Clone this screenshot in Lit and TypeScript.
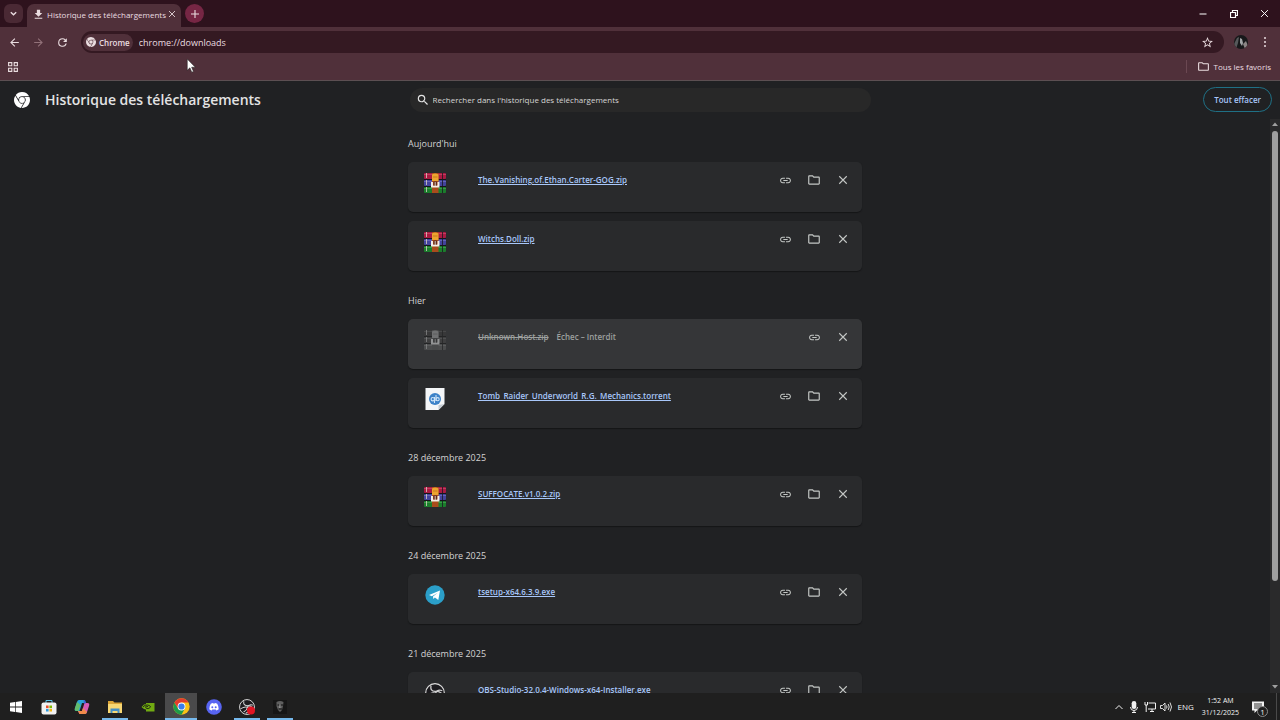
import { LitElement, html, css, svg, nothing, TemplateResult } from "lit";
import { customElement, property } from "lit/decorators.js";

type FileKind = "rar" | "torrent" | "telegram" | "obs";
interface Download { name: string; kind: FileKind; failed?: string; }
interface Group { date: string; items: Download[]; }

const GROUPS: Group[] = [
  { date: "Aujourd'hui", items: [
    { name: "The.Vanishing.of.Ethan.Carter-GOG.zip", kind: "rar" },
    { name: "Witchs.Doll.zip", kind: "rar" } ] },
  { date: "Hier", items: [
    { name: "Unknown.Host.zip", kind: "rar", failed: "Échec – Interdit" },
    { name: "Tomb_Raider_Underworld_R.G._Mechanics.torrent", kind: "torrent" } ] },
  { date: "28 décembre 2025", items: [{ name: "SUFFOCATE.v1.0.2.zip", kind: "rar" }] },
  { date: "24 décembre 2025", items: [{ name: "tsetup-x64.6.3.9.exe", kind: "telegram" }] },
  { date: "21 décembre 2025", items: [{ name: "OBS-Studio-32.0.4-Windows-x64-Installer.exe", kind: "obs" }] },
];

const icon = (size: number, box: string, body: TemplateResult | unknown) =>
  html`<svg width=${size} height=${size} viewBox=${box} fill="currentColor" aria-hidden="true">${body}</svg>`;

const closeIcon = (size: number) => icon(size, "0 0 12 12",
  svg`<path d="M1.5 1.5l9 9M10.5 1.5l-9 9" stroke="currentColor" stroke-width="1.3" fill="none"/>`);
const linkIcon = icon(13, "0 0 24 24",
  svg`<path d="M3.9 12c0-1.71 1.39-3.1 3.1-3.1h4V7H7c-2.76 0-5 2.24-5 5s2.24 5 5 5h4v-1.9H7c-1.71 0-3.1-1.39-3.1-3.1zM8 13h8v-2H8v2zm9-6h-4v1.9h4c1.71 0 3.1 1.39 3.1 3.1s-1.39 3.1-3.1 3.1h-4V17h4c2.76 0 5-2.24 5-5s-2.24-5-5-5z"/>`);
const folderIcon = icon(14, "0 0 24 24",
  svg`<path d="M9.17 6l2 2H20v10H4V6h5.17M10 4H4c-1.1 0-1.99.9-1.99 2L2 18c0 1.1.9 2 2 2h16c1.1 0 2-.9 2-2V8c0-1.1-.9-2-2-2h-8l-2-2z"/>`);
const searchIcon = icon(14, "0 0 24 24",
  svg`<path d="M15.5 14h-.79l-.28-.27A6.47 6.47 0 0 0 16 9.5 6.5 6.5 0 1 0 9.5 16c1.61 0 3.09-.59 4.23-1.57l.27.28v.79l5 4.99L20.49 19l-4.99-5zm-6 0C7.01 14 5 11.99 5 9.5S7.01 5 9.5 5 14 7.01 14 9.5 11.99 14 9.5 14z"/>`);

const chromeMono = (size: number) => icon(size, "0 0 24 24",
  svg`<path d="M12 0C8.21 0 4.831 1.757 2.632 4.501l3.953 6.848A5.454 5.454 0 0 1 12 6.545h10.691A12 12 0 0 0 12 0zM1.931 5.47A11.943 11.943 0 0 0 0 12c0 6.012 4.42 10.991 10.189 11.864l3.953-6.847a5.45 5.45 0 0 1-6.865-2.29zm13.342 2.166a5.446 5.446 0 0 1 1.45 7.09l.002.001h-.002l-5.344 9.257c.206.01.413.016.621.016 6.627 0 12-5.373 12-12 0-1.54-.29-3.011-.818-4.364zM12 16.364a4.364 4.364 0 1 1 0-8.728 4.364 4.364 0 0 1 0 8.728Z"/>`);

const chromeColor = icon(17, "0 0 48 48", svg`
  <circle cx="24" cy="24" r="23" fill="#fbc116"/>
  <path d="M4.1 12.5A23 23 0 0 0 24 47L33.5 29.5 24 24 14.5 29.5z" fill="#1e9b4b"/>
  <path d="M4.1 12.5A23 23 0 0 1 43.9 12.5L44 13H24L14.5 29.5z" fill="#e33b2e"/>
  <circle cx="24" cy="24" r="11" fill="#fff"/><circle cx="24" cy="24" r="8.8" fill="#3b7ded"/>`);

const rarIcon = html`<svg width="22" height="20" viewBox="0 0 22 20" aria-hidden="true">
  <rect y="0" width="22" height="6" rx="1" fill="#a81a42"/><rect y="1" width="22" height="1" fill="#c23a60"/>
  <rect y="7" width="22" height="6" rx="1" fill="#43439c"/><rect y="8" width="22" height="1" fill="#6464b8"/>
  <rect y="14" width="22" height="6" rx="1" fill="#1b7d2c"/><rect y="15" width="22" height="1" fill="#3a9a46"/>
  <path d="M0 6.5h22M0 13.5h22" stroke="#15151b"/>
  <path d="M2.500 0v20" stroke="#d8cfc2" stroke-width=".8" stroke-dasharray="5 2"/>
  <path d="M18.500 0v20" stroke="#181820" stroke-width=".8"/>
  <rect x="8" y="0" width="6.500" height="20" fill="#a94c1c"/>
  <path d="M8 1.500q3-2 6.500 0V8H8z" fill="#eda52f"/><path d="M9 4h4.500" stroke="#c9781e"/>
  <path d="M7 9h2v3.500h4.500V9h2v5.500H7z" fill="#f4eee6"/><rect x="9.500" y="8.500" width="3.500" height="4" fill="#612b1c"/>
  <path d="M11.200 9v4" stroke="#f4eee6" stroke-width=".8"/>
</svg>`;

const torrentIcon = html`<svg width="20" height="22" viewBox="0 0 20 22" aria-hidden="true">
  <path d="M.5 0h19v16l-6 6H.5z" fill="#f4f6f8"/><path d="M19.500 16l-6 1v5z" fill="#c5ccd3"/>
  <circle cx="10" cy="11" r="6" fill="#3c82c8"/>
  <g fill="none" stroke="#cfe4f8" stroke-width="1.100"><circle cx="7.800" cy="11.200" r="1.700"/><path d="M9.500 9v6M11 7v6"/><circle cx="12.600" cy="11.200" r="1.600"/></g>
</svg>`;

const telegramIcon = html`<svg width="20" height="20" viewBox="0 0 20 20" aria-hidden="true">
  <circle cx="10" cy="10" r="9.700" fill="#2b9fc9"/>
  <path d="M4 9.900L15 5.500 13.300 15 9.900 12.500 8.300 14.100 8 11.600 12.800 7.700 6.900 11.200z" fill="#fff"/>
</svg>`;

const obsIcon = (size: number, dot = false) => icon(size, "0 0 20 20", svg`
  <circle cx="10" cy="10" r="9.300" fill="#1c1b1f" stroke="#dcdcdc" stroke-width="1.200"/>
  <g fill="none" stroke="#d0d0d0" stroke-width="1.300" stroke-linecap="round">
    <path d="M6 3.200q-1 4.600 4 5.200 4-.6 6.600 2"/><path d="M16.800 7.500q-4.400-1.400-6.200 2.500-.6 4-4.400 6"/><path d="M9 17.500q4.600-1.600 3.600-5.800Q10 9 5.500 10.500L2.500 12"/>
  </g>
  ${dot ? svg`<circle cx="15" cy="14.500" r="5" fill="#e01523"/>` : nothing}`);

const FILE_ICONS: Record<FileKind, TemplateResult> = {
  rar: rarIcon, torrent: torrentIcon, telegram: telegramIcon, obs: obsIcon(20),
};

const base = css`
  * { box-sizing: border-box; }
  button, input { font: inherit; color: inherit; background: none; border: 0; padding: 0; margin: 0; outline: 0; }
  button { display: inline-flex; align-items: center; justify-content: center; }
  svg { display: block; flex: none; }
  a { color: inherit; }
`;

@customElement("browser-chrome")
export class BrowserChrome extends LitElement {
  static styles = [base, css`
    :host { display: block; background: #50303a; color: #eadde0; font-size: 8px; }
    .tabs { display: flex; align-items: center; height: 27px; background: #2e121d; }
    .picker { width: 19px; height: 19px; margin-left: 4px; border-radius: 6px; background: #4a2934; }
    .tab { display: flex; align-items: center; align-self: flex-end; gap: 2px; height: 23px; width: 154px; margin-left: 4px; padding: 0 5px 3px 5px; background: #50303a; border-radius: 7px 7px 0 0; }
    .tab .name { flex: 1; white-space: nowrap; }
    .add { width: 19px; height: 19px; border-radius: 50%; background: #762644; margin-left: 4px; }
    .window { display: flex; margin-left: auto; }
    .window button { width: 31px; height: 27px; color: #fff; }
    .bar { display: flex; align-items: center; height: 30px; padding: 0 3px 0 2px; }
    .bar > button { width: 24px; height: 24px; }
    .dim { color: #927179; }
    .omni { flex: 1; display: flex; align-items: center; gap: 6px; height: 22px; margin: 0 5px 0 7px; padding: 0 10px 0 2px; border-radius: 11px; background: #341922; }
    .chip { display: flex; align-items: center; gap: 3px; height: 17px; padding: 0 3px; border-radius: 9px; background: #50303a; font-weight: 600; }
    .omni input { flex: 1; height: 18px; font-size: 9px; }
    .avatar { border-radius: 50%; }
    .marks { display: flex; align-items: center; height: 24px; padding: 0 9px 4px 8px; border-bottom: 1px solid #5c4f52; }
    .all { margin-left: auto; gap: 4px; padding-left: 10px; border-left: 1px solid #6b4852; }
  `];
  render() {
    return html`
      <div class="tabs">
        <button class="picker" aria-label="Rechercher dans les onglets">${icon(9, "0 0 10 10", svg`<path d="M2 3.500l3 3 3-3" fill="none" stroke="currentColor" stroke-width="1.500"/>`)}</button>
        <div class="tab">
          ${icon(13, "0 0 24 24", svg`<path d="M19 9h-4V3H9v6H5l7 7 7-7zM5 18v2h14v-2H5z"/>`)}
          <span class="name">Historique des téléchargements</span>
          <button aria-label="Fermer l'onglet">${closeIcon(8)}</button>
        </div>
        <button class="add" aria-label="Nouvel onglet">${icon(10, "0 0 10 10", svg`<path d="M5 1v8M1 5h8" stroke="currentColor" stroke-width="1.100"/>`)}</button>
        <div class="window">
          <button aria-label="Réduire">${icon(8, "0 0 8 8", svg`<path d="M.5 4h7" stroke="currentColor"/>`)}</button>
          <button aria-label="Restaurer">${icon(8, "0 0 8 8", svg`<path d="M.5 2.500h5v5h-5zM2.500 2V.5h5v5H6" fill="none" stroke="currentColor" stroke-width="1.200"/>`)}</button>
          <button aria-label="Fermer">${closeIcon(9)}</button>
        </div>
      </div>
      <div class="bar">
        <button aria-label="Retour">${icon(13, "0 0 24 24", svg`<path d="M20 11H7.830l5.590-5.590L12 4l-8 8 8 8 1.410-1.410L7.830 13H20v-2z"/>`)}</button>
        <button class="dim" aria-label="Avancer">${icon(13, "0 0 24 24", svg`<path d="M12 4l-1.410 1.410L16.170 11H4v2h12.170l-5.580 5.590L12 20l8-8z"/>`)}</button>
        <button aria-label="Actualiser">${icon(13, "0 0 24 24", svg`<path d="M17.650 6.350A7.958 7.958 0 0 0 12 4a8 8 0 1 0 7.730 10h-2.080A6 6 0 1 1 12 6c1.660 0 3.140.69 4.220 1.780L13 11h7V4l-2.350 2.350z"/>`)}</button>
        <div class="omni">
          <span class="chip">${chromeMono(10)}Chrome</span>
          <input aria-label="Adresse" value="chrome://downloads" />
          <button aria-label="Ajouter aux favoris">${icon(13, "0 0 24 24", svg`<path d="M22 9.240l-7.190-.62L12 2 9.190 8.630 2 9.240l5.460 4.730L5.820 21 12 17.270 18.180 21l-1.630-7.030L22 9.240zM12 15.400l-3.760 2.270 1-4.280-3.320-2.880 4.380-.38L12 6.100l1.710 4.040 4.380.38-3.320 2.880 1 4.280L12 15.400z"/>`)}</button>
        </div>
        <button aria-label="Profil"><svg class="avatar" width="14" height="14" viewBox="0 0 14 14"><rect width="14" height="14" fill="#17181a"/><path d="M0 9l3-6 2-1-1 6-2 6H0z" fill="#56585a"/><path d="M6 3l2 1 1 4-1 3-2-3z" fill="#a3a6a8"/><path d="M9 9l3-3 2 5-3 3z" fill="#8b8585"/></svg></button>
        <button aria-label="Menu">${icon(12, "0 0 24 24", svg`<circle cx="12" cy="4" r="2"/><circle cx="12" cy="12" r="2"/><circle cx="12" cy="20" r="2"/>`)}</button>
      </div>
      <div class="marks">
        <button aria-label="Applications">${icon(10, "0 0 10 10", svg`<path d="M.6.6h3.200v3.200H.6zM6.200.6h3.200v3.200H6.200zM.6 6.200h3.200v3.200H.6zM6.200 6.200h3.200v3.200H6.200z" fill="none" stroke="currentColor" stroke-width="1.100"/>`)}</button>
        <button class="all">${icon(13, "0 0 24 24", svg`<path d="M9.170 6l2 2H20v10H4V6h5.170M10 4H4c-1.100 0-2 .9-2 2v12c0 1.100.9 2 2 2h16c1.100 0 2-.9 2-2V8c0-1.100-.9-2-2-2h-8l-2-2z"/>`)}Tous les favoris</button>
      </div>`;
  }
}

@customElement("download-card")
export class DownloadCard extends LitElement {
  @property({ attribute: false }) item!: Download;
  static styles = [base, css`
    :host { display: block; }
    .card { display: flex; align-items: flex-start; height: 50px; padding: 0 11px 0 16px; border-radius: 5px; background: #292a2c; box-shadow: 0 1px 1px #151617; font-size: 8px; font-weight: 600; }
    .pic { display: flex; align-items: center; justify-content: center; width: 22px; height: 22px; margin: 10px 32px 0 0; }
    .text { flex: 1; padding-top: 11px; line-height: 14px; white-space: nowrap; }
    a { color: #a8c7fa; }
    .actions { display: flex; gap: 13px; padding-top: 10px; color: #c4c7c5; }
    .actions button { width: 16px; height: 16px; }
    .failed { background: #353638; color: #9da09f; }
    .failed .pic { filter: grayscale(1); opacity: .5; }
    .failed .name { text-decoration: line-through; margin-right: 8px; }
  `];
  render() {
    const { name, kind, failed } = this.item;
    return html`<article class=${failed ? "card failed" : "card"}>
      <span class="pic">${FILE_ICONS[kind]}</span>
      <div class="text">${failed ? html`<span class="name">${name}</span><span>${failed}</span>` : html`<a href="#">${name}</a>`}</div>
      <div class="actions">
        <button aria-label="Copier le lien">${linkIcon}</button>
        ${failed ? nothing : html`<button aria-label="Afficher dans le dossier">${folderIcon}</button>`}
        <button aria-label="Supprimer">${closeIcon(10)}</button>
      </div>
    </article>`;
  }
}

@customElement("task-bar")
export class TaskBar extends LitElement {
  static styles = [base, css`
    :host { display: flex; align-items: center; height: 27px; background: #1f1f1f; color: #f2f2f2; font-size: 8px; }
    .apps { display: flex; gap: 1px; height: 100%; }
    .apps button { width: 32px; }
    .apps .open { background: linear-gradient(#76b9ed, #76b9ed) bottom / 26px 2px no-repeat; }
    .apps .active { background-color: #4a4a4b; background-size: 32px 2px; }
    .tray { display: flex; align-items: center; gap: 4px; margin-left: auto; height: 100%; padding-right: 3px; }
    .lang { margin-left: 2px; }
    .clock { line-height: 12px; text-align: center; margin: 0 9px 0 4px; font-size: 7px; }
    .notes { position: relative; padding-right: 12px; border-right: 1px solid #4a4a4a; height: 100%; }
    .count { position: absolute; left: 5px; top: 13px; width: 11px; height: 11px; border: 1px solid #8a8a8a; border-radius: 50%; background: #1f1f1f; line-height: 9px; font-size: 8px; }
  `];
  render() {
    const app = (label: string, cls: string, pic: unknown) => html`<button class=${cls} aria-label=${label}>${pic}</button>`;
    return html`
      <div class="apps">
        ${app("Démarrer", "", icon(12, "0 0 12 12", svg`<path d="M0 1.800L5 1v4.600H0zM5.700.9L12 0v5.600H5.700zM0 6.400h5V11l-5-.8zM5.700 6.400H12V12l-6.300-.9z" fill="#fff"/>`))}
        ${app("Microsoft Store", "", icon(16, "0 0 16 16", svg`<path d="M5 4V1.500h6V4" fill="none" stroke="#5ec4e8"/><rect x=".5" y="3.500" width="15" height="12" rx="2" fill="#f1f1f1"/><path d="M5 6.500h2.600v2.600H5z" fill="#e8502c"/><path d="M8.400 6.500H11v2.600H8.400z" fill="#7fba00"/><path d="M5 9.900h2.600v2.600H5z" fill="#2f9be0"/><path d="M8.400 9.900H11v2.600H8.400z" fill="#f2b50f"/>`))}
        ${app("Copilot", "", icon(16, "0 0 16 16", svg`<path d="M5 1h5.500l1.500 3H8L5.500 12H2.500Q0 12 1 9l2-6Q3.600 1 5 1z" fill="#2aa5d8"/><path d="M1 9l2-6 3.500 3-2 6H2.500Q0 12 1 9z" fill="#63bd6c"/><path d="M11 15H5.500L4 12h4l2.500-8h3Q16 4 15 7l-2 6q-.6 2-2 2z" fill="#d65bb4"/><path d="M11 15H5.500L4 12h4l1-3 4 4q-.6 2-2 2z" fill="#ef8a4a"/><path d="M9.500 1h1q1 0 1.500 3l-2 1z" fill="#3c5fd0"/>`))}
        ${app("Explorateur", "open", icon(16, "0 0 16 16", svg`<path d="M1 2h5l1.500 1.500H15V6H1z" fill="#dca537"/><path d="M1 5h14v9H1z" fill="#f8d773"/><path d="M3.500 9.500h9V14h-2v-2h-5v2h-2z" fill="#468fc4"/>`))}
        ${app("NVIDIA", "", icon(14, "0 0 14 14", svg`<path d="M5 3h8.500v8.500H5z" fill="#71aa12"/><path d="M.5 7Q3 3.500 6.500 3.800 9.600 4 11 7 9 9.800 6.500 10 3 10 .5 7z" fill="#71aa12"/><path d="M2 7q2-2.500 4.500-2Q9 5.200 9.600 7 8 9 6 8.600 4.500 8 4.600 6.700q1-.9 2.400 0" fill="none" stroke="#1c2410" stroke-width=".9"/>`))}
        ${app("Chrome", "open active", chromeColor)}
        ${app("Discord", "", icon(16, "0 0 16 16", svg`<circle cx="8" cy="8" r="7.800" fill="#5865f2"/><path d="M4.800 4.800q1.500-.9 2.200-.8l.3.600h1.400l.3-.6q1 0 2.200.8 1.600 2.600 1.500 5.400-1.200 1-2.400 1.200l-.6-1H6.300l-.6 1q-1.300-.2-2.400-1.200Q3.200 7.400 4.800 4.800z" fill="#fff"/><circle cx="6.300" cy="8.200" r="1" fill="#5865f2"/><circle cx="9.700" cy="8.200" r="1" fill="#5865f2"/>`))}
        ${app("OBS", "open", obsIcon(16, true))}
        ${app("Jeu", "open", icon(14, "0 0 14 14", svg`<rect width="14" height="14" fill="#161616"/><path d="M3.500 2q3.500-2 7 0l-.5 4-1 4-2 2-2-2-1.500-4z" fill="#5f5f5f"/><path d="M4.500 4.500h2v1h-2zM8 4.500h2v1H8zM5.500 8.500h3.500v1H5.500z" fill="#0c0c0c"/><path d="M6.800 3l.8 5H6z" fill="#929292"/>`))}
      </div>
      <div class="tray">
        ${icon(10, "0 0 10 10", svg`<path d="M1.500 7L5 3.500 8.500 7" fill="none" stroke="currentColor"/>`)}
        ${icon(12, "0 0 12 12", svg`<rect x="3.700" y="0" width="4.600" height="8" rx="2.300"/><path d="M2.500 6q0 3.500 3.500 3.500T9.500 6M6 9.500V12M4 11.500h4" fill="none" stroke="currentColor"/>`)}
        ${icon(12, "0 0 12 12", svg`<path d="M4.500 2h7v6H4M6 10.500h4M8 8v2.500M1 1v3h2.500V1M2.200 4v7" fill="none" stroke="currentColor"/>`)}
        ${icon(12, "0 0 12 12", svg`<path d="M.5 4.500h2l2.500-2.500v8L2.500 7.500h-2zM6.500 4.500q1 1.500 0 3M8.200 3q2 3 0 6M10 1.500q3 4.500 0 9" fill="none" stroke="currentColor" stroke-width=".9"/>`)}
        <span class="lang">ENG</span>
        <time class="clock">1:52 AM<br />31/12/2025</time>
        <button class="notes" aria-label="Notifications">${icon(12, "0 0 12 12", svg`<path d="M0 .5h12v9H5L2.500 12V9.500H0z"/><path d="M2 3h8M2 5h8M2 7h5" stroke="#1f1f1f" stroke-width=".9"/>`)}<span class="count">1</span></button>
      </div>`;
  }
}

@customElement("app-root")
export class AppRoot extends LitElement {
  static styles = [base, css`
    :host { display: flex; flex-direction: column; height: 100vh; overflow: hidden; background: #202123; color: #e3e3e3; font-family: "Open Sans", "Noto Sans", sans-serif; font-size: 8px; }
    header { display: grid; grid-template-columns: 1fr minmax(0, 461px) 1fr; align-items: center; height: 38px; padding: 0 8px 1px; }
    .brand { display: flex; align-items: center; gap: 15px; padding-left: 6px; color: #fff; }
    h1 { margin: 0; font-size: 14px; font-weight: 600; color: #e3e3e3; white-space: nowrap; }
    .search { display: flex; align-items: center; gap: 3px; height: 24px; padding: 0 6px; border-radius: 12px; background: #282828; }
    .search input { flex: 1; font-weight: 500; }
    .search input::placeholder { color: #d5d5d5; opacity: 1; }
    .clear { justify-self: end; height: 25px; padding: 0 10px; border: 1px solid #1f7085; border-radius: 13px; color: #a8c7fa; font-weight: 600; }
    .view { flex: 1; min-height: 0; display: flex; }
    main { flex: 1; overflow: hidden; display: flex; flex-direction: column; align-items: center; }
    section { width: 100%; max-width: 454px; flex: none; }
    h2 { margin: 0; height: 48px; padding-top: 23px; line-height: 14px; font-size: 9px; font-weight: 400; color: #d3d3d3; }
    section:first-child h2 { height: 43px; padding-top: 18px; }
    .cards { display: grid; gap: 9px; }
    .scroll { display: flex; flex-direction: column; align-items: center; gap: 4px; width: 10px; padding: 2px 0 3px; background: #2a2a2b; color: #a0a0a0; }
    .track { flex: 1; width: 6px; }
    .thumb { height: 82%; border-radius: 3px; background: #9f9f9f; }
    .pointer { position: absolute; left: 186px; top: 58px; }
  `];
  render() {
    return html`
      <browser-chrome></browser-chrome>
      <header>
        <div class="brand">${chromeMono(16)}<h1>Historique des téléchargements</h1></div>
        <label class="search">${searchIcon}<input type="search" aria-label="Rechercher" placeholder="Rechercher dans l'historique des téléchargements" /></label>
        <button class="clear">Tout effacer</button>
      </header>
      <div class="view">
        <main>
          ${GROUPS.map((g) => html`<section>
            <h2>${g.date}</h2>
            <div class="cards">${g.items.map((d) => html`<download-card .item=${d}></download-card>`)}</div>
          </section>`)}
        </main>
        <div class="scroll">
          ${icon(6, "0 0 6 6", svg`<path d="M0 5l3-3.500L6 5z"/>`)}
          <div class="track"><div class="thumb"></div></div>
          ${icon(6, "0 0 6 6", svg`<path d="M0 1l3 3.500L6 1z"/>`)}
        </div>
      </div>
      <task-bar></task-bar>
      <svg class="pointer" width="10" height="15" viewBox="0 0 9 14" aria-hidden="true"><path d="M1 1v10.500l2.500-2.300 1.700 4 1.600-.7-1.700-3.900h3.400z" fill="#fff" stroke="#222" stroke-width=".5"/></svg>`;
  }
}
